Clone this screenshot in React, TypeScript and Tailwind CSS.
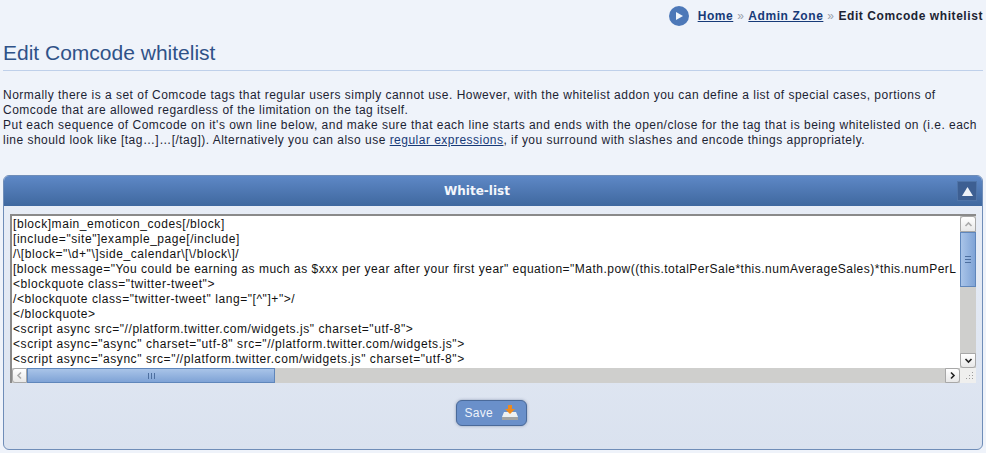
import React from "react";

const lines = [
  "[block]main_emoticon_codes[/block]",
  '[include="site"]example_page[/include]',
  '/\\[block="\\d+"\\]side_calendar\\[\\/block\\]/',
  '<blockquote class="twitter-tweet">',
  '/<blockquote class="twitter-tweet" lang="[^"]+">/',
  "</blockquote>",
  '<script async src="//platform.twitter.com/widgets.js" charset="utf-8">',
  '<script async="async" charset="utf-8" src="//platform.twitter.com/widgets.js">',
  '<script async="async" src="//platform.twitter.com/widgets.js" charset="utf-8">',
];

const longLine =
  '[block message="You could be earning as much as $xxx per year after your first year" equation="Math.pow((this.totalPerSale*this.numAverageSales)*this.numPerL';

function Chevron({ d, stroke }: { d: string; stroke: string }) {
  return (
    <svg width="9" height="9" viewBox="0 0 9 9" fill="none" stroke={stroke} strokeWidth="1.6">
      <path d={d} />
    </svg>
  );
}

function ScrollButton({ d, stroke, className }: { d: string; stroke: string; className: string }) {
  return (
    <div className={"flex shrink-0 items-center justify-center border border-[#a8a8a8] bg-gradient-to-b from-white to-[#e8e8e8] " + className}>
      <Chevron d={d} stroke={stroke} />
    </div>
  );
}

export default function App() {
  return (
    <div className="h-[453px] w-[986px] overflow-hidden bg-[#eff3fa] font-['Liberation_Sans',Arial,sans-serif] text-[12px] text-[#1c2333]">
      <div className="flex h-[32px] items-start justify-end pr-[3px] pt-[6px]">
        <div className="mr-[9px] flex h-[20px] w-[20px] items-center justify-center rounded-full bg-[#4d78b8]">
          <svg width="10" height="10" viewBox="0 0 10 10">
            <path d="M2 1 L9 5 L2 9 Z" fill="#f2f6fc" />
          </svg>
        </div>
        <div className="mt-[3px] text-[12px] font-bold leading-[14px] tracking-[0.57px]">
          <a className="text-[#173a78] underline">Home</a>
          <span className="font-normal text-[#9aa0aa]"> » </span>
          <a className="text-[#173a78] underline">Admin Zone</a>
          <span className="font-normal text-[#9aa0aa]"> » </span>
          <span>Edit Comcode whitelist</span>
        </div>
      </div>

      <h1 className="mx-[3px] mt-[8px] h-[31px] border-b border-[#bfd0ea] text-[21px] font-normal leading-[26px] text-[#2f5288]">
        Edit Comcode whitelist
      </h1>

      <div className="mx-[3px] mt-[17px] text-[12px] leading-[15px] tracking-[0.48px]">
        <p>
          Normally there is a set of Comcode tags that regular users simply cannot use. However, with the whitelist addon you can define a list of special cases, portions of
          <br />
          Comcode that are allowed regardless of the limitation on the tag itself.
        </p>
        <p>
          Put each sequence of Comcode on it's own line below, and make sure that each line starts and ends with the open/close for the tag that is being whitelisted on (i.e. each
          <br />
          line should look like [tag…]…[/tag]). Alternatively you can also use <a className="text-[#173a78] underline">regular expressions</a>, if you surround with slashes and encode things appropriately.
        </p>
      </div>

      <div className="mx-[3px] mt-[27px] h-[275px] rounded-[6px] border border-[#6f8db8] bg-gradient-to-b from-[#e9eef7] to-[#dae2ef]">
        <div className="relative flex h-[30px] items-center justify-center rounded-t-[5px] bg-gradient-to-b from-[#5e88c6] to-[#3f689f] pr-[32px] font-['DejaVu_Sans',sans-serif] text-[12px] font-bold text-[#f4f7fc]">
          White-list
          <div className="absolute right-[5px] top-[5px] flex h-[20px] w-[20px] items-center justify-center border border-[#4f74a8] bg-[#3d5f92]">
            <svg width="11" height="9" viewBox="0 0 11 9">
              <path d="M5.5 0 L11 9 L0 9 Z" fill="#eef2f8" />
            </svg>
          </div>
        </div>

        <div className="ml-[6px] mt-[8px] flex h-[169px] w-[966px] flex-col border-l-2 border-t-2 border-[#8a8a8a] bg-white">
          <div className="flex min-h-0 flex-1">
            <div className="min-w-0 flex-1 whitespace-pre pl-[1px] pt-[1px] text-[12px] leading-[15px] tracking-[0.56px] text-[#111]">
              {lines.slice(0, 3).map((line) => (
                <div key={line}>{line}</div>
              ))}
              <div className="tracking-[0.49px]">{longLine}</div>
              {lines.slice(3).map((line) => (
                <div key={line}>{line}</div>
              ))}
            </div>
            <div className="flex w-[16px] shrink-0 flex-col bg-[#cfcfcd]">
              <ScrollButton d="M1.5 6 L4.5 3 L7.5 6" stroke="#aaa" className="h-[16px] rounded-t-[3px]" />
              <div className="flex h-[55px] items-center justify-center border border-[#5f86bb] bg-gradient-to-r from-[#a9c4e8] to-[#7fa3d6]">
                <div className="flex flex-col gap-[2px]">
                  <div className="h-px w-[6px] bg-[#4d6f9f]" />
                  <div className="h-px w-[6px] bg-[#4d6f9f]" />
                  <div className="h-px w-[6px] bg-[#4d6f9f]" />
                </div>
              </div>
              <div className="flex-1" />
              <ScrollButton d="M1.5 3 L4.5 6 L7.5 3" stroke="#222" className="h-[15px] rounded-b-[3px]" />
            </div>
          </div>
          <div className="flex h-[15px] shrink-0">
            <div className="flex flex-1 bg-[#cfcfcd]">
              <ScrollButton d="M6 1.5 L3 4.5 L6 7.5" stroke="#aaa" className="w-[15px] rounded-l-[3px]" />
              <div className="flex w-[248px] items-center justify-center gap-[2px] border border-[#5f86bb] bg-gradient-to-b from-[#a9c4e8] to-[#7fa3d6]">
                <div className="h-[6px] w-px bg-[#4d6f9f]" />
                <div className="h-[6px] w-px bg-[#4d6f9f]" />
                <div className="h-[6px] w-px bg-[#4d6f9f]" />
              </div>
              <div className="flex-1" />
              <ScrollButton d="M3 1.5 L6 4.5 L3 7.5" stroke="#222" className="w-[15px] rounded-r-[3px]" />
            </div>
            <div className="w-[16px] shrink-0 bg-[#efefee]">
              <svg width="16" height="15" viewBox="0 0 16 15" fill="#9a9a9a">
                <rect x="12" y="4" width="1" height="1" />
                <rect x="9" y="7" width="1" height="1" />
                <rect x="12" y="7" width="1" height="1" />
                <rect x="6" y="10" width="1" height="1" />
                <rect x="9" y="10" width="1" height="1" />
                <rect x="12" y="10" width="1" height="1" />
              </svg>
            </div>
          </div>
        </div>

        <div className="mt-[17px] flex justify-center pr-[4px]">
          <button className="flex h-[26px] w-[71px] items-center gap-[8px] rounded-[6px] border border-[#4a6a9a] bg-[#6a90ca] pl-[8px] text-[12px] tracking-[0.3px] text-[#eef3fa] shadow-[0_0_3px_rgba(60,80,120,0.5)]">
            Save
            <svg width="18" height="16" viewBox="0 0 18 16">
              <path d="M3 7 L15 7 L17 12 L1 12 Z" fill="#eef0f2" />
              <rect x="1" y="12" width="16" height="3" fill="#a3a3a3" />
              <path d="M7 0 L11 0 L11 4 L14 4 L9 9 L4 4 L7 4 Z" fill="#ee8a1e" />
            </svg>
          </button>
        </div>
      </div>
    </div>
  );
}
